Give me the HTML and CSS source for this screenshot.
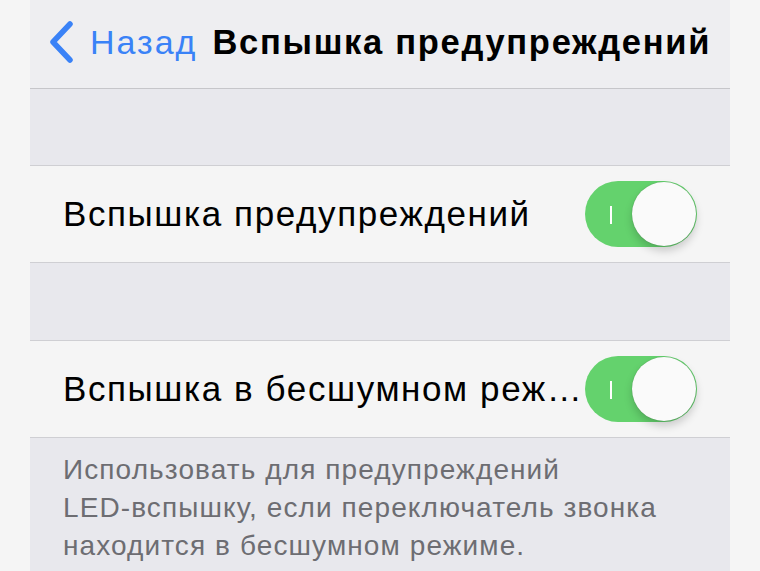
FILE: index.html
```html
<!DOCTYPE html>
<html lang="ru">
<head>
<meta charset="utf-8">
<link rel="stylesheet" href="styles.css">
</head>
<body>
<div class="screen">
  <header class="nav">
    <a class="back">
      <svg class="chev" width="28" height="42" viewBox="0 0 28 42"><path d="M23 3 L6 21 L23 39" fill="none" stroke="#3a82f7" stroke-width="5.5" stroke-linecap="round" stroke-linejoin="round"/></svg>
      <span class="back-text">Назад</span>
    </a>
    <h1 class="title">Вспышка предупреждений</h1>
  </header>
  <div class="gap gap1"></div>
  <div class="row">
    <span class="label">Вспышка предупреждений</span>
    <span class="toggle"><span class="mark"></span><span class="knob"></span></span>
  </div>
  <div class="gap gap2"></div>
  <div class="row">
    <span class="label">Вспышка в бесшумном реж…</span>
    <span class="toggle"><span class="mark"></span><span class="knob"></span></span>
  </div>
  <div class="footer">
    <p class="note">Использовать для предупреждений<br>LED-вспышку, если переключатель звонка<br>находится в бесшумном режиме.</p>
  </div>
</div>
</body>
</html>
```
FILE: styles.css
```css
html, body {
  margin: 0;
  padding: 0;
  background: #f5f5f5;
  height: 571px;
  overflow: hidden;
}
body {
  font-family: "Liberation Sans", Arial, sans-serif;
}
.screen {
  width: 700px;
  margin-left: 30px;
  display: flex;
  flex-direction: column;
  height: 571px;
}
.nav {
  height: 88px;
  background: #eeeef1;
  border-bottom: 1px solid #c6c6ca;
  display: flex;
  align-items: center;
  padding-left: 17px;
}
.back {
  display: flex;
  align-items: center;
  color: #3a82f7;
  margin-top: -4px;
}
.chev {
  display: block;
  margin-right: 15px;
}
.back-text {
  font-size: 34px;
  letter-spacing: 2px;
}
.title {
  margin: -4px 0 0 15px;
  font-size: 34.5px;
  letter-spacing: 1.7px;
  font-weight: bold;
  color: #000;
  white-space: nowrap;
}
.gap {
  background: #e8e8ed;
  border-bottom: 1px solid #cfcfd3;
}
.gap1 { height: 76px; }
.gap2 { height: 77px; }
.row {
  height: 96px;
  background: #f5f5f5;
  border-bottom: 1px solid #cfcfd3;
  display: flex;
  align-items: center;
  justify-content: space-between;
  padding: 0 33px 0 33px;
}
.label {
  font-size: 35px;
  letter-spacing: 1.6px;
  color: #000;
  white-space: nowrap;
}
.toggle {
  position: relative;
  width: 112px;
  height: 66px;
  border-radius: 33px;
  background: #64d26d;
  flex: none;
}
.mark {
  position: absolute;
  left: 25px;
  top: 25px;
  width: 2px;
  height: 18px;
  background: #fff;
}
.knob {
  position: absolute;
  right: 1px;
  top: 1px;
  width: 64px;
  height: 64px;
  border-radius: 50%;
  background: #fafafa;
  box-shadow: 0 5px 9px rgba(0,0,0,0.18), 0 0 1px rgba(0,0,0,0.3);
}
.footer {
  flex: 1;
  background: #e8e8ed;
  padding: 13px 33px 0 33px;
}
.note {
  margin: 0;
  font-size: 28px;
  letter-spacing: 1.1px;
  line-height: 38px;
  color: #6d6d72;
  white-space: nowrap;
}
```
